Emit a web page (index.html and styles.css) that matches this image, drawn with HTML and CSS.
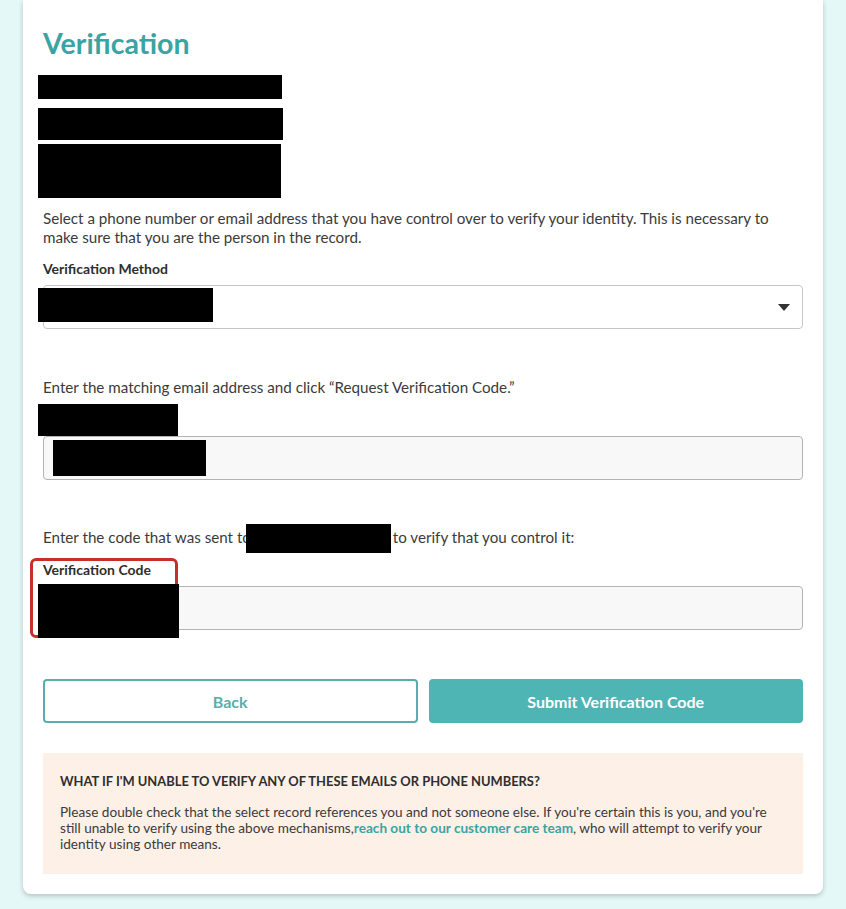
FILE: index.html
```html
<!DOCTYPE html>
<html lang="en">
<head>
<meta charset="utf-8">
<title>Verification</title>
<link rel="stylesheet" href="styles.css">
</head>
<body>
<main class="card">
  <h1 class="title">Verification</h1>
  <div class="redact-stack">
    <span class="redact r1"></span>
    <span class="redact r2"></span>
    <span class="redact r3"></span>
  </div>
  <p class="intro">Select a phone number or email address that you have control over to verify your identity. This is necessary to<br>make sure that you are the person in the record.</p>

  <label class="label">Verification Method</label>
  <div class="select">
    <span class="redact r-select"></span>
    <svg class="caret" width="12" height="7" viewBox="0 0 12 7"><path d="M0 0h12L6 7z" fill="#333"/></svg>
  </div>

  <p class="step step-email">Enter the matching email address and click “Request Verification Code.”</p>
  <span class="redact r-email-label"></span>
  <div class="input">
    <span class="redact r-email"></span>
  </div>

  <p class="step step-code">Enter the code that was sent to <span class="redact r-inline"></span> to verify that you control it:</p>
  <div class="code-field">
    <label class="label code-label">Verification Code</label>
    <div class="input code-input"></div>
    <span class="highlight"></span>
    <span class="redact r-code"></span>
  </div>

  <div class="actions">
    <button class="btn btn-outline">Back</button>
    <button class="btn btn-solid">Submit Verification Code</button>
  </div>

  <section class="help">
    <h2 class="help-title">WHAT IF I'M UNABLE TO VERIFY ANY OF THESE EMAILS OR PHONE NUMBERS?</h2>
    <p class="help-text">Please double check that the select record references you and not someone else. If you're certain this is you, and you're<br>still unable to verify using the above mechanisms,<a class="help-link" href="#">reach out to our customer care team</a>, who will attempt to verify your<br>identity using other means.</p>
  </section>
</main>
</body>
</html>
```

FILE: styles.css
```css
* { box-sizing: border-box; }

html, body {
  margin: 0;
  padding: 0;
}

body {
  background: #e5f8f8;
  font-family: Lato, "Open Sans", sans-serif;
  color: #3b3b3b;
  width: 846px;
  height: 909px;
  overflow: hidden;
}

.card {
  width: 800px;
  margin: 0 0 0 23px;
  background: #fff;
  border-radius: 0 0 8px 8px;
  box-shadow: 0 2px 5px rgba(0, 0, 0, 0.22);
  padding: 26px 20px 20px;
  display: flex;
  flex-direction: column;
}

.title {
  margin: 0;
  font-size: 28.5px;
  line-height: 34px;
  font-weight: 700;
  color: #3aa4a4;
}

.redact {
  display: block;
  background: #000;
}

.redact-stack {
  display: flex;
  flex-direction: column;
  margin: 15px 0 0 -5px;
}

.r1 { width: 244px; height: 24px; }
.r2 { width: 245px; height: 32px; margin-top: 9px; }
.r3 { width: 243px; height: 54px; margin-top: 4px; }

.intro {
  margin: 11px 0 0;
  font-size: 15.2px;
  line-height: 19px;
}

.label {
  display: block;
  margin-top: 13px;
  font-size: 14px;
  line-height: 18px;
  font-weight: 700;
  color: #2e2e2e;
}

.select {
  margin-top: 7px;
  height: 44px;
  border: 1px solid #c6c6c6;
  border-radius: 4px;
  display: flex;
  align-items: center;
  justify-content: space-between;
  padding-right: 12px;
}

.r-select {
  width: 175px;
  height: 34px;
  margin-left: -6px;
  margin-top: -5px;
}

.step {
  margin: 49px 0 0;
  font-size: 15.2px;
  line-height: 19px;
}

.r-email-label {
  width: 140px;
  height: 32px;
  margin: 7px 0 0 -5px;
}

.input {
  height: 44px;
  background: #f8f8f8;
  border: 1px solid #b3b3b3;
  border-radius: 4px;
  display: flex;
  align-items: center;
}

.r-email {
  width: 153px;
  height: 36px;
  margin-left: 9px;
}

.step-code {
  margin-top: 48px;
}

.r-inline {
  display: inline-block;
  vertical-align: middle;
  width: 145px;
  height: 29px;
  margin: -10px -2px -10px -9px;
  position: relative;
  top: -1px;
}

.code-field {
  position: relative;
  margin-top: 14px;
}

.code-label {
  margin-top: 0;
}

.code-input {
  margin-top: 7px;
}

.highlight {
  position: absolute;
  left: -13px;
  top: -3px;
  width: 148px;
  height: 80px;
  border: 3px solid #c2312b;
  border-radius: 6px;
}

.r-code {
  position: absolute;
  left: -5px;
  top: 23px;
  width: 141px;
  height: 54px;
}

.actions {
  margin-top: 49px;
  display: grid;
  grid-template-columns: 1fr 1fr;
  gap: 11px;
}

.btn {
  height: 44px;
  border-radius: 4px;
  font-family: inherit;
  font-size: 16px;
  font-weight: 700;
  cursor: pointer;
}

.btn-outline {
  background: #fff;
  border: 2px solid #5aadad;
  color: #5aadad;
}

.btn-solid {
  background: #4fb4b4;
  border: 2px solid #4fb4b4;
  color: #fff;
}

.help {
  margin-top: 30px;
  background: #fdf0e7;
  padding: 20px 17px 19px;
  height: 121px;
}

.help-title {
  margin: 0;
  font-size: 12.9px;
  line-height: 16px;
  font-weight: 700;
  color: #2e2e2e;
}

.help-text {
  margin: 15px 0 0;
  font-size: 13.6px;
  line-height: 16px;
  color: #3b3b3b;
}

.help-link {
  color: #3aa4a4;
  font-weight: 700;
  text-decoration: none;
}
```
